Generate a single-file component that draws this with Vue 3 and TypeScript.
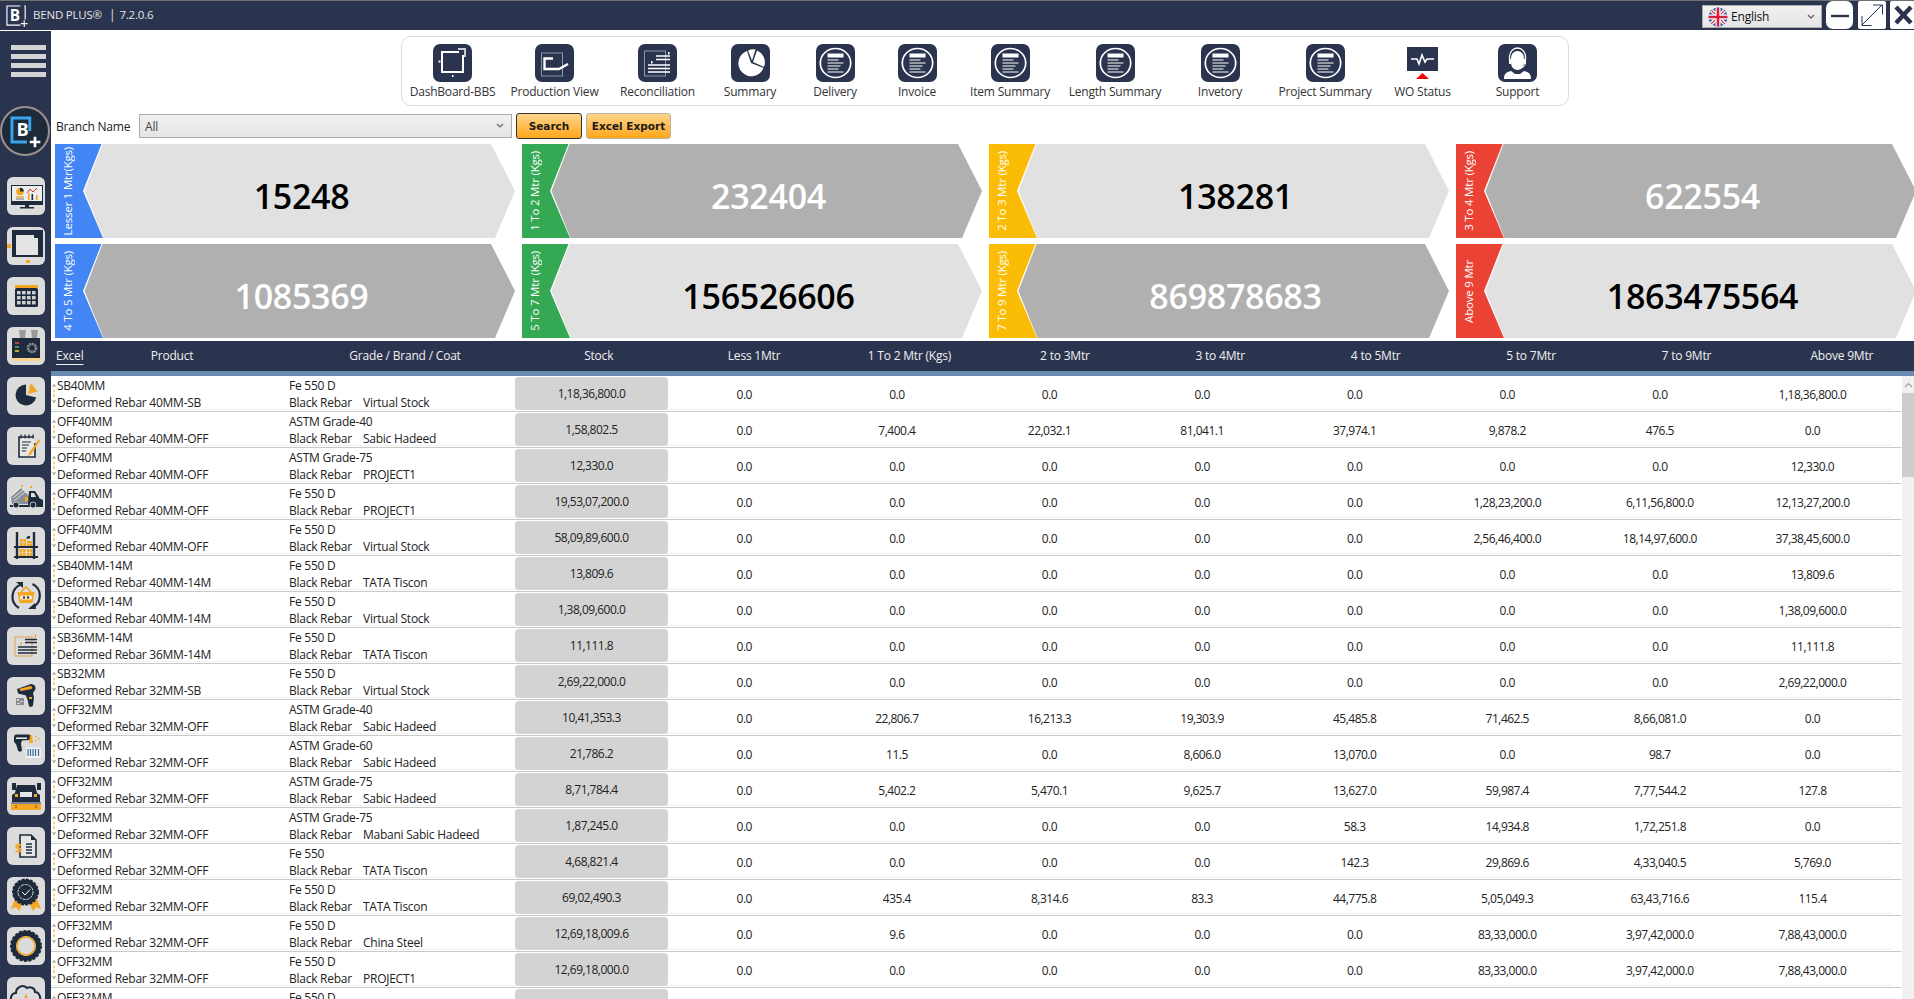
<template>
  <div class="app">
    <header class="titlebar">
      <svg class="title-logo" viewBox="0 0 24 24">
        <path d="M15 1H1v20h14" fill="none" stroke="#fff" stroke-width="1.2" />
        <path d="M19 1h1v14" fill="none" stroke="#fff" stroke-width="1.2" />
        <text x="4" y="17" font-size="16" font-weight="700" fill="#fff" font-family="Open Sans, sans-serif">B</text>
        <path d="M19 16v7M15.5 19.5h7" stroke="#fff" stroke-width="1.2" />
      </svg>
      <span class="title-text">BEND PLUS®</span>
      <span class="title-sep">|</span>
      <span class="title-text">7.2.0.6</span>
      <div class="title-right">
        <div class="lang">
          <svg class="flag" viewBox="0 0 20 20">
            <clipPath id="flagclip"><circle cx="10" cy="10" r="9.5" /></clipPath>
            <g clip-path="url(#flagclip)">
              <rect width="20" height="20" fill="#2a56a8" />
              <path d="M0 0l20 20M20 0L0 20" stroke="#fff" stroke-width="4" />
              <path d="M0 0l20 20M20 0L0 20" stroke="#d8203c" stroke-width="1.2" />
              <path d="M10 0v20M0 10h20" stroke="#fff" stroke-width="5" />
              <path d="M10 0v20M0 10h20" stroke="#d8203c" stroke-width="2.6" />
            </g>
          </svg>
          <span>English</span>
          <svg class="chev" viewBox="0 0 8 6"><path d="M1 1l3 3 3-3" fill="none" stroke="#666" stroke-width="1.4" /></svg>
        </div>
        <button class="win win-min"><svg viewBox="0 0 27 28"><path d="M5 15h18" stroke="#2b344e" stroke-width="2.4" /></svg></button>
        <button class="win win-max">
          <svg viewBox="0 0 28 28">
            <path d="M4 24L24 4M15 4h9.5v9.5M4 15v9.5h9.5" fill="none" stroke="#2b344e" stroke-width="1" />
          </svg>
        </button>
        <button class="win win-close"><svg viewBox="0 0 24 28"><path d="M6 6l15 16M21 6L6 22" stroke="#2b344e" stroke-width="4.4" /></svg></button>
      </div>
    </header>

    <div class="shell">
      <aside class="sidebar">
        <div class="burger"><i></i><i></i><i></i><i></i></div>
        <div class="brand">
          <svg viewBox="0 0 48 48">
            <path d="M29 24V10.400H10.400V35.500H26" fill="none" stroke="#38a5ef" stroke-width="3" />
            <text x="15" y="29" font-size="19" font-weight="700" fill="#fff" font-family="Open Sans, sans-serif">B</text>
            <path d="M34.400 30v11M29 35.500h11" stroke="#fff" stroke-width="2.800" />
          </svg>
        </div>

        <div class="side-btn">
          <svg viewBox="0 0 38 38">
            <rect x="4" y="8" width="32" height="20" fill="#1d2b3d" />
            <rect x="5" y="9" width="30" height="15" fill="#ededed" />
            <path d="M18 27h4v3h-4zM13 30h14v1.6H13z" fill="#1d2b3d" />
            <circle cx="13" cy="14.5" r="3.8" fill="#f5a623" />
            <path d="M13 14.5V10.7a3.8 3.8 0 0 1 3.8 3.8z" fill="#1d2b3d" />
            <path d="M9 20h8" stroke="#f5a623" stroke-width="1.4" />
            <path d="M9 22h8" stroke="#555" stroke-width=".8" />
            <path d="M21 16h1.6v7H21zM29 18h1.6v5H29z" fill="#f5a623" />
            <path d="M24.5 17h1.6v6h-1.6z" fill="#1d2b3d" />
            <path d="M20 16l3-4 3 3 4-4" fill="none" stroke="#d8342c" stroke-width="1" />
          </svg>
        </div>
        <div class="side-btn">
          <svg viewBox="0 0 38 38">
            <path d="M5 3h31v27H5z" fill="#1d2b3d" />
            <path d="M9 8h18v3h4v17H9z" fill="#e3e3e3" />
            <path d="M0 17h4v4H0zM19 33h4v3h-4z" fill="#f5a623" />
          </svg>
        </div>
        <div class="side-btn">
          <svg viewBox="0 0 38 38">
            <rect x="8" y="8" width="23" height="3" fill="#f5a623" />
            <rect x="8" y="11" width="23" height="19" rx="1.5" fill="#1d2b3d" />
            <g fill="#cfcfcf">
              <rect x="10" y="14" width="3.6" height="3.4" /><rect x="15" y="14" width="3.6" height="3.4" /><rect x="20" y="14" width="3.6" height="3.4" /><rect x="25" y="14" width="3.6" height="3.4" />
              <rect x="10" y="19" width="3.6" height="3.4" /><rect x="15" y="19" width="3.6" height="3.4" /><rect x="20" y="19" width="3.6" height="3.4" /><rect x="25" y="19" width="3.6" height="3.4" />
              <rect x="10" y="24" width="3.6" height="3.4" /><rect x="15" y="24" width="3.6" height="3.4" /><rect x="20" y="24" width="3.6" height="3.4" /><rect x="25" y="24" width="3.6" height="3.4" />
            </g>
          </svg>
        </div>
        <div class="side-btn">
          <svg viewBox="0 0 38 38">
            <path d="M12 3h7l-1 8h-5zM24 3h7l-1 8h-5z" fill="#9a9a9a" />
            <rect x="5" y="11" width="28" height="20" fill="#1d2b3d" />
            <path d="M8 16h4" stroke="#e0483c" stroke-width="1.6" />
            <path d="M8 20h4" stroke="#46b25a" stroke-width="1.6" />
            <path d="M8 24h4" stroke="#f5c623" stroke-width="1.6" />
            <circle cx="25" cy="21" r="4" fill="none" stroke="#8d8d8d" stroke-width="2.6" stroke-dasharray="2 .6" />
            <rect x="6" y="31" width="28" height="3" fill="#fbd38b" />
          </svg>
        </div>
        <div class="side-btn">
          <svg viewBox="0 0 38 38">
            <path d="M19 7.500a10.500 10.500 0 1 0 10.200 13L19 18z" fill="#1d2b3d" />
            <path d="M23 8l1.500-1.500 6 8L21 17z" fill="#f5a623" />
          </svg>
        </div>
        <div class="side-btn">
          <svg viewBox="0 0 38 38">
            <path d="M28 16v14H12V10h15" fill="#e7e7e7" stroke="#1d2b3d" stroke-width="1.6" />
            <path d="M14 7.500v4M18 7.500v4M22 7.500v4M26 7.500v4" stroke="#1d2b3d" stroke-width="1.2" />
            <path d="M15 15h9M15 18h7M15 21h5M15 24h4" stroke="#1d2b3d" stroke-width="1" />
            <path d="M32 12L22 26l-1 3 3-1.500L33 14z" fill="#f5a623" />
          </svg>
        </div>
        <div class="side-btn">
          <svg viewBox="0 0 38 38">
            <path d="M4 20l10-9 8 8v8H5z" fill="#8a8f98" />
            <path d="M5 18l9-8M6 21l10-8M7 24l11-9" stroke="#f0f0f0" stroke-width=".8" />
            <path d="M14 10l2-2" stroke="#f5a623" stroke-width="1.4" />
            <path d="M22 14h6l4 6v1l4 2v5H21z" fill="#1d2b3d" />
            <path d="M24 16h3l2 4h-5z" fill="#e0e0e0" />
            <path d="M18 20h3v4h-3zM23 9h2v2h-2z" fill="#f5a623" />
            <path d="M3 28h33v2H3z" fill="#1d2b3d" />
            <circle cx="9" cy="28" r="3" fill="#1d2b3d" stroke="#ddd" stroke-width=".8" />
            <circle cx="26" cy="28" r="3" fill="#1d2b3d" stroke="#ddd" stroke-width=".8" />
          </svg>
        </div>
        <div class="side-btn">
          <svg viewBox="0 0 38 38">
            <path d="M10 5v27M27 5v27" stroke="#1d2b3d" stroke-width="2.4" />
            <path d="M7 20h24M7 30h24" stroke="#1d2b3d" stroke-width="1.8" />
            <path d="M13 12h6v7h-6zM20 14h5v5h-5zM12.500 22h6v7h-6zM20 22h5v7h-5z" fill="#f5a623" />
            <path d="M13 15.500h6M16 12v7M12.500 25.500h6M15.500 22v7M20 25.500h5M22.500 22v7M20 16.500h5" stroke="#e3e3e3" stroke-width=".6" />
            <path d="M19 11l2-2h2v2l-2 1z" fill="#1d2b3d" />
          </svg>
        </div>
        <div class="side-btn">
          <svg viewBox="0 0 38 38">
            <path d="M14 7.500A13 13 0 0 0 12 31" fill="none" stroke="#1d2b3d" stroke-width="2.2" />
            <path d="M24 31a13 13 0 0 0 1.500-24" fill="none" stroke="#1d2b3d" stroke-width="2.2" />
            <path d="M9 5h7v6zM29 32h-8l7-6z" fill="#1d2b3d" />
            <path d="M14 15l5-5 5 5" fill="none" stroke="#f5a623" stroke-width="1.6" />
            <path d="M10.500 15h17l-2 11h-13z" fill="#f5a623" />
            <rect x="13" y="18.500" width="12" height="4" rx="1" fill="#f4e6cf" />
            <path d="M16 19.500h2v2h-2zM20 19.500h2v2h-2z" fill="#1d2b3d" />
          </svg>
        </div>
        <div class="side-btn">
          <svg viewBox="0 0 38 38">
            <rect x="8" y="10" width="17" height="19" fill="none" stroke="#e2ad66" stroke-width="1.2" />
            <path d="M18 12.500h12M18 15.500h12" stroke="#1d2b3d" stroke-width="1.6" />
            <path d="M11 20h19M11 23h19M11 26h19" stroke="#1d2b3d" stroke-width="1.6" />
            <path d="M28 7l1.500 1-1 3-1.200-.5zM14 15l1.500 1-1.500 2-1-1z" fill="#f5a623" />
          </svg>
        </div>
        <div class="side-btn">
          <svg viewBox="0 0 38 38">
            <path d="M10 12l14-5c4 0 5.500 4 4 6l-2 3 1 5-1 7c0 2-2.500 2-4 1.500l-1-5-2-6-8-2z" fill="#1d2b3d" />
            <path d="M12 12l11-3c2 0 3 2 1.500 3L14 14z" fill="#f5a623" />
            <path d="M22 20h3v2h-3z" fill="#f5a623" />
            <rect x="9" y="21" width="8" height="7" fill="#8a8a8a" />
            <path d="M10 22h2v2h-2zM13 24h3v1h-3zM10 26h3v1h-3z" fill="#dcdcdc" />
          </svg>
        </div>
        <div class="side-btn">
          <svg viewBox="0 0 38 38">
            <path d="M7 10c0-1.500 1-2.500 2-2.500h13c2 0 2 5.500 0 5.500l-7 .5-1 3 1 7c-.5 1.500-3.500 1.500-4 0L9 17 7 15z" fill="#1d2b3d" />
            <path d="M9 10.500h11v1.400H9z" fill="#fff" />
            <path d="M23 8h2l1 8h-4z" fill="#f5a623" />
            <path d="M28 9h1.500v1.500H28zM31 11h1.500v1.500H31zM28 13h1.500v1.500H28z" fill="#f5a623" />
            <rect x="19" y="20.500" width="15" height="10.500" fill="#eef1f5" />
            <path d="M21 22v7M23.500 22v7M26 22v7M28.500 22v7M31.500 22v7" stroke="#3f6a96" stroke-width="1.2" />
          </svg>
        </div>
        <div class="side-btn">
          <svg viewBox="0 0 38 38">
            <path d="M5 6h4v7H5zM30 6h4v7h-4z" fill="#1d2b3d" />
            <path d="M10 8h18l2 8 3 2v7H5v-7l3-2z" fill="#1d2b3d" />
            <path d="M13 15h12v5H13z" fill="#e6e6e6" />
            <path d="M8 17h3v3H8zM27 17h3v3h-3z" fill="#f5a623" />
            <rect x="4" y="27" width="30" height="6" fill="#f5a623" />
            <path d="M4 26h30" stroke="#1d2b3d" stroke-width="1" />
            <path d="M9 28v4M29 28v4" stroke="#1d2b3d" stroke-width="1" stroke-dasharray="1 1" />
          </svg>
        </div>
        <div class="side-btn">
          <svg viewBox="0 0 38 38">
            <path d="M13 8h11l5 5v17H13z" fill="#e6e6e6" stroke="#1d2b3d" stroke-width="1.6" />
            <path d="M24 8v5h5z" fill="#1d2b3d" />
            <path d="M19 17h6M19 20h6M19 23h6M19 26h6" stroke="#1d2b3d" stroke-width="1.4" />
            <text x="8" y="26" font-size="13" font-weight="700" fill="#f5a623" font-family="Open Sans, sans-serif">$</text>
          </svg>
        </div>
        <div class="side-btn">
          <svg viewBox="0 0 38 38">
            <path d="M8 22l-4 10 5-2 3 4 4-8zM30 22l4 10-5-2-3 4-4-8z" fill="#f5a623" />
            <circle cx="18.500" cy="15" r="12.500" fill="#1d2b3d" stroke="#1d2b3d" stroke-width="2" stroke-dasharray="3 1.200" />
            <circle cx="18.500" cy="15" r="12" fill="#1d2b3d" />
            <circle cx="18.500" cy="15" r="7.500" fill="none" stroke="#fff" stroke-width=".8" stroke-dasharray="3 .8" />
            <path d="M15 15l3 3 5-5.500" fill="none" stroke="#fff" stroke-width="1" />
          </svg>
        </div>
        <div class="side-btn">
          <svg viewBox="0 0 38 38">
            <circle cx="19" cy="19" r="12.500" fill="none" stroke="#1d2b3d" stroke-width="5" />
            <circle cx="19" cy="19" r="15" fill="none" stroke="#1d2b3d" stroke-width="2" stroke-dasharray="3 1.500" />
            <circle cx="19" cy="19" r="9" fill="#dcdcdc" stroke="#f5a623" stroke-width="1.600" />
          </svg>
        </div>
        <div class="side-btn">
          <svg viewBox="0 0 38 38">
            <path d="M6 26c-4-3-2-10 3-10 0-6 7-9 11-5 3-2 8 0 8 4 5 0 7 8 3 11" fill="none" stroke="#1d2b3d" stroke-width="2" />
            <path d="M19 17l2 4h-4zM14 22h10v6H14z" fill="#f5a623" />
          </svg>
        </div>
      </aside>

      <main class="main">
        <nav class="toolbar">
          <div v-for="t in tools" :key="t.label" class="tool">
            <div v-if="t.icon === 'wo'" class="wo-icon">
              <svg viewBox="0 0 31 32">
                <rect width="31" height="24" fill="#2b344e" />
                <path d="M4 12h6l2 5 3-9 3 7 2-3h7" fill="none" stroke="#fff" stroke-width="1.6" />
                <path d="M9 32l6.500-6 6.500 6z" fill="#ff0000" />
              </svg>
            </div>
            <div v-else class="tool-icon">
              <svg v-if="t.icon === 'doc'" viewBox="0 0 39 38">
                <ellipse cx="19.500" cy="19" rx="15.200" ry="14.500" fill="none" stroke="#fff" stroke-width="1.700" />
                <path d="M11.500 9.500h16v4h-16z" fill="#fff" />
                <path d="M11.500 16h11M11.500 19h16M11.500 22h13M11.500 25h11M11.500 28h16" stroke="#fff" stroke-width="1.200" />
              </svg>
              <svg v-else-if="t.icon === 'dash'" viewBox="0 0 39 38">
                <path d="M26 8H9v20h21V11" fill="none" stroke="#fff" stroke-width="2" />
                <path d="M25 5h7v8" fill="none" stroke="#c9ccd3" stroke-width="2" />
                <rect x="5.500" y="16.500" width="2" height="2" fill="#fff" />
                <rect x="19" y="31" width="1.500" height="2" fill="#fff" />
              </svg>
              <svg v-else-if="t.icon === 'prod'" viewBox="0 0 39 38">
                <rect x="6.500" y="9" width="21" height="23" fill="none" stroke="#8f95a6" stroke-width="1" />
                <path d="M18 14.500H9.500V25H24l9-5" fill="none" stroke="#fff" stroke-width="2.400" />
              </svg>
              <svg v-else-if="t.icon === 'rec'" viewBox="0 0 39 38">
                <rect x="6.500" y="7" width="21" height="25" fill="none" stroke="#8f95a6" stroke-width="1" />
                <path d="M18 12h14M18 15.500h14M10 21h22M10 24.500h22M10 28h22" stroke="#fff" stroke-width="1.700" />
                <rect x="30" y="8" width="1.500" height="2.500" fill="#fff" />
                <rect x="13" y="17" width="1.500" height="2.500" fill="#fff" />
              </svg>
              <svg v-else-if="t.icon === 'pie'" viewBox="0 0 39 38">
                <path d="M16 7a13 13 0 1 0 16.500 17L20 19z" fill="#fff" />
                <path d="M17 6.500l4 10 3.500-11a13 13 0 0 0-7.500 1z" fill="#fff" />
                <path d="M26 6.500a13 13 0 0 1 7 16.500l-11-5z" fill="#fff" />
              </svg>
              <svg v-else viewBox="0 0 39 38">
                <path d="M13 14a6.500 7 0 0 1 13 0v5a6.500 7 0 0 1-13 0z" fill="#fff" />
                <path d="M11.500 16v-3a8 9 0 0 1 16 0v3" fill="none" stroke="#fff" stroke-width="1.300" />
                <path d="M11 15h2v5h-2zM26 15h2v5h-2z" fill="#fff" />
                <path d="M27 20c0 3-3 4-6 4" fill="none" stroke="#fff" stroke-width="1" />
                <path d="M6 35c0-5 2-7 7-8l4 3h5l4-3c5 1 7 3 7 8z" fill="#fff" />
              </svg>
            </div>
            <span class="tool-label">{{ t.label }}</span>
          </div>
        </nav>

        <div class="filter">
          <label class="filter-label">Branch Name</label>
          <div class="branch">
            <span>All</span>
            <svg class="chev" viewBox="0 0 8 6"><path d="M1 1l3 3 3-3" fill="none" stroke="#666" stroke-width="1.200" /></svg>
          </div>
          <button class="btn btn-search">Search</button>
          <button class="btn btn-export">Excel Export</button>
        </div>

        <section class="cards">
          <div v-for="c in cards" :key="c.label" class="card">
            <div class="card-tag" :style="{ background: c.color }"><span>{{ c.label }}</span></div>
            <div class="card-body" :class="c.dark ? 'is-dark' : 'is-light'"><span>{{ c.value }}</span></div>
          </div>
        </section>

        <div class="thead">
          <span class="th-excel"><u>Excel</u></span>
          <span>Product</span>
          <span class="th-grade">Grade / Brand / Coat</span>
          <span v-for="h in heads" :key="h">{{ h }}</span>
        </div>
        <div class="tstrip"></div>

        <div class="tbody">
          <div class="rows">
            <div v-for="(r, i) in rows" :key="i" class="row">
              <div class="row-in">
                <div class="cell-product">
                  <svg class="sort" viewBox="0 0 6 30">
                    <path d="M1.500 8l1.500-2.500L4.500 8M1.500 21l1.500 2.500L4.500 21" fill="none" stroke="#777" stroke-width=".8" />
                    <path d="M3 10.500v8" stroke="#f5a623" stroke-width="1" stroke-dasharray="3 1.500" />
                  </svg>
                  <div class="lines">
                    <div>{{ r.code }}</div>
                    <div>{{ r.name }}</div>
                  </div>
                </div>
                <div class="lines cell-grade">
                  <div>{{ r.grade }}</div>
                  <div><span class="coat">Black Rebar</span>{{ r.brand }}</div>
                </div>
                <div class="stock-wrap"><div class="stock">{{ r.stock }}</div></div>
                <div v-for="(v, j) in r.vals" :key="j" class="val">{{ v }}</div>
              </div>
            </div>
          </div>
          <div class="scroll">
            <div class="scroll-up"><svg viewBox="0 0 9 6"><path d="M1 5l3.500-3.500L8 5" fill="none" stroke="#a0a0a0" stroke-width="1.200" /></svg></div>
            <div class="scroll-thumb"></div>
          </div>
        </div>
      </main>
    </div>
  </div>
</template>

<script setup lang="ts">
interface Tool { label: string, icon: string }
interface Card { label: string, value: string, color: string, dark: boolean }
interface Row { code: string, name: string, grade: string, brand: string, stock: string, vals: string[] }

const blue = '#4285f4'
const green = '#34a853'
const yellow = '#fbbc05'
const red = '#ea4335'

const tools: Tool[] = [
  { label: 'DashBoard-BBS', icon: 'dash' },
  { label: 'Production View', icon: 'prod' },
  { label: 'Reconciliation', icon: 'rec' },
  { label: 'Summary', icon: 'pie' },
  { label: 'Delivery', icon: 'doc' },
  { label: 'Invoice', icon: 'doc' },
  { label: 'Item Summary', icon: 'doc' },
  { label: 'Length Summary', icon: 'doc' },
  { label: 'Invetory', icon: 'doc' },
  { label: 'Project Summary', icon: 'doc' },
  { label: 'WO Status', icon: 'wo' },
  { label: 'Support', icon: 'support' },
]

const cards: Card[] = [
  { label: 'Lesser 1 Mtr(Kgs)', value: '15248', color: blue, dark: false },
  { label: '1 To 2 Mtr (Kgs)', value: '232404', color: green, dark: true },
  { label: '2 To 3 Mtr (Kgs)', value: '138281', color: yellow, dark: false },
  { label: '3 To 4 Mtr (Kgs)', value: '622554', color: red, dark: true },
  { label: '4 To 5 Mtr (Kgs)', value: '1085369', color: blue, dark: true },
  { label: '5 To 7 Mtr (Kgs)', value: '156526606', color: green, dark: false },
  { label: '7 To 9 Mtr (Kgs)', value: '869878683', color: yellow, dark: true },
  { label: 'Above 9 Mtr', value: '1863475564', color: red, dark: false },
]

const heads = ['Stock', 'Less 1Mtr', '1 To 2 Mtr (Kgs)', '2 to 3Mtr', '3 to 4Mtr', '4 to 5Mtr', '5 to 7Mtr', '7 to 9Mtr', 'Above 9Mtr']

// only the last column filled, used by most of the rows
function lastOnly(v: string) {
  return ['0.0', '0.0', '0.0', '0.0', '0.0', '0.0', '0.0', v]
}

const rows: Row[] = [
  { code: 'SB40MM', name: 'Deformed Rebar 40MM-SB', grade: 'Fe 550 D', brand: 'Virtual Stock', stock: '1,18,36,800.0', vals: lastOnly('1,18,36,800.0') },
  { code: 'OFF40MM', name: 'Deformed Rebar 40MM-OFF', grade: 'ASTM Grade-40', brand: 'Sabic Hadeed', stock: '1,58,802.5', vals: ['0.0', '7,400.4', '22,032.1', '81,041.1', '37,974.1', '9,878.2', '476.5', '0.0'] },
  { code: 'OFF40MM', name: 'Deformed Rebar 40MM-OFF', grade: 'ASTM Grade-75', brand: 'PROJECT1', stock: '12,330.0', vals: lastOnly('12,330.0') },
  { code: 'OFF40MM', name: 'Deformed Rebar 40MM-OFF', grade: 'Fe 550 D', brand: 'PROJECT1', stock: '19,53,07,200.0', vals: ['0.0', '0.0', '0.0', '0.0', '0.0', '1,28,23,200.0', '6,11,56,800.0', '12,13,27,200.0'] },
  { code: 'OFF40MM', name: 'Deformed Rebar 40MM-OFF', grade: 'Fe 550 D', brand: 'Virtual Stock', stock: '58,09,89,600.0', vals: ['0.0', '0.0', '0.0', '0.0', '0.0', '2,56,46,400.0', '18,14,97,600.0', '37,38,45,600.0'] },
  { code: 'SB40MM-14M', name: 'Deformed Rebar 40MM-14M', grade: 'Fe 550 D', brand: 'TATA Tiscon', stock: '13,809.6', vals: lastOnly('13,809.6') },
  { code: 'SB40MM-14M', name: 'Deformed Rebar 40MM-14M', grade: 'Fe 550 D', brand: 'Virtual Stock', stock: '1,38,09,600.0', vals: lastOnly('1,38,09,600.0') },
  { code: 'SB36MM-14M', name: 'Deformed Rebar 36MM-14M', grade: 'Fe 550 D', brand: 'TATA Tiscon', stock: '11,111.8', vals: lastOnly('11,111.8') },
  { code: 'SB32MM', name: 'Deformed Rebar 32MM-SB', grade: 'Fe 550 D', brand: 'Virtual Stock', stock: '2,69,22,000.0', vals: lastOnly('2,69,22,000.0') },
  { code: 'OFF32MM', name: 'Deformed Rebar 32MM-OFF', grade: 'ASTM Grade-40', brand: 'Sabic Hadeed', stock: '10,41,353.3', vals: ['0.0', '22,806.7', '16,213.3', '19,303.9', '45,485.8', '71,462.5', '8,66,081.0', '0.0'] },
  { code: 'OFF32MM', name: 'Deformed Rebar 32MM-OFF', grade: 'ASTM Grade-60', brand: 'Sabic Hadeed', stock: '21,786.2', vals: ['0.0', '11.5', '0.0', '8,606.0', '13,070.0', '0.0', '98.7', '0.0'] },
  { code: 'OFF32MM', name: 'Deformed Rebar 32MM-OFF', grade: 'ASTM Grade-75', brand: 'Sabic Hadeed', stock: '8,71,784.4', vals: ['0.0', '5,402.2', '5,470.1', '9,625.7', '13,627.0', '59,987.4', '7,77,544.2', '127.8'] },
  { code: 'OFF32MM', name: 'Deformed Rebar 32MM-OFF', grade: 'ASTM Grade-75', brand: 'Mabani Sabic Hadeed', stock: '1,87,245.0', vals: ['0.0', '0.0', '0.0', '0.0', '58.3', '14,934.8', '1,72,251.8', '0.0'] },
  { code: 'OFF32MM', name: 'Deformed Rebar 32MM-OFF', grade: 'Fe 550', brand: 'TATA Tiscon', stock: '4,68,821.4', vals: ['0.0', '0.0', '0.0', '0.0', '142.3', '29,869.6', '4,33,040.5', '5,769.0'] },
  { code: 'OFF32MM', name: 'Deformed Rebar 32MM-OFF', grade: 'Fe 550 D', brand: 'TATA Tiscon', stock: '69,02,490.3', vals: ['0.0', '435.4', '8,314.6', '83.3', '44,775.8', '5,05,049.3', '63,43,716.6', '115.4'] },
  { code: 'OFF32MM', name: 'Deformed Rebar 32MM-OFF', grade: 'Fe 550 D', brand: 'China Steel', stock: '12,69,18,009.6', vals: ['0.0', '9.6', '0.0', '0.0', '0.0', '83,33,000.0', '3,97,42,000.0', '7,88,43,000.0'] },
  { code: 'OFF32MM', name: 'Deformed Rebar 32MM-OFF', grade: 'Fe 550 D', brand: 'PROJECT1', stock: '12,69,18,000.0', vals: ['0.0', '0.0', '0.0', '0.0', '0.0', '83,33,000.0', '3,97,42,000.0', '7,88,43,000.0'] },
  { code: 'OFF32MM', name: 'Deformed Rebar 32MM-OFF', grade: 'Fe 550 D', brand: 'Virtual Stock', stock: '12,69,18,000.0', vals: ['0.0', '0.0', '0.0', '0.0', '0.0', '83,33,000.0', '3,97,42,000.0', '7,88,43,000.0'] },
]
</script>

<style scoped>
.app {
  width: 1914px;
  height: 999px;
  overflow: hidden;
  display: flex;
  flex-direction: column;
  background: #fff;
  font-family: "Open Sans", "Noto Sans", sans-serif;
  font-size: 12px;
  letter-spacing: -.2px;
  color: #222;
}

.titlebar {
  height: 30px;
  flex: none;
  box-sizing: border-box;
  border-top: 1px solid #707070;
  background: #2b344e;
  color: #e6e6e6;
  display: flex;
  align-items: center;
  padding-left: 6px;
}
.title-logo { width: 23px; height: 23px; margin-right: 4px; margin-top: 2px; }
.title-text { font-size: 11.5px; margin-bottom: 3px; }
.title-sep { margin: 0 4px 3px 7px; font-size: 12px; }
.title-right { margin-left: auto; display: flex; align-items: center; }

.lang {
  width: 120px;
  height: 23px;
  box-sizing: border-box;
  border: 1px solid #acacac;
  background: linear-gradient(#f0f0f0, #e5e5e5);
  display: flex;
  align-items: center;
  padding: 0 6px 0 5px;
  color: #111;
  margin-right: 4px;
  margin-top: 2px;
}
.flag { width: 20px; height: 20px; margin-right: 3px; }
.lang .chev { margin-left: auto; }
.chev { width: 8px; height: 6px; }

.win {
  border: 0;
  padding: 0;
  background: #fff;
  height: 28px;
  display: block;
  margin-bottom: 1px;
}
.win svg { display: block; width: 100%; height: 100%; }
.win-min { width: 27px; border-radius: 7px; margin-right: 5px; }
.win-max { width: 28px; border-radius: 2px; margin-right: 4px; }
.win-close { width: 24px; border-radius: 2px 0 0 2px; }

.shell { flex: 1; display: flex; min-height: 0; }

.sidebar {
  width: 51px;
  flex: none;
  box-sizing: border-box;
  background: #2b344e;
  border-top: 1px solid #fff;
  display: flex;
  flex-direction: column;
  align-items: center;
  padding-top: 14px;
  overflow: hidden;
}
.burger {
  width: 35px;
  margin-left: 6px;
  display: flex;
  flex-direction: column;
  gap: 4px;
}
.burger i { display: block; height: 5px; background: #d4d4d4; }
.brand {
  width: 50px;
  height: 50px;
  box-sizing: border-box;
  flex: none;
  margin-top: 29px;
  margin-left: -1px;
  border-radius: 50%;
  border: 2px solid #9c9090;
  background: #1c2a3a;
}
.brand svg { display: block; width: 100%; height: 100%; }
.side-btn {
  width: 38px;
  height: 38px;
  flex: none;
  margin-top: 12px;
  border-radius: 6px;
  background: #dcdcdc;
}
.brand + .side-btn { margin-top: 21px; }
.side-btn svg { display: block; width: 38px; height: 38px; }

.main { flex: 1; min-width: 0; overflow: hidden; display: flex; flex-direction: column; }

.toolbar {
  width: 1168px;
  height: 70px;
  box-sizing: border-box;
  margin: 6px 0 0 350px;
  border: 1px solid #dadada;
  border-radius: 10px;
  display: grid;
  grid-template-columns: 101px 103px 103px 82px 88px 76px 110px 100px 110px 100px 95px 95px;
  flex: none;
}
.tool { display: flex; flex-direction: column; align-items: center; padding-top: 7px; }
.tool-icon {
  width: 39px;
  height: 38px;
  border-radius: 7px;
  background: #2b344e;
}
.tool-icon svg { display: block; width: 39px; height: 38px; }
.wo-icon { width: 39px; height: 38px; display: flex; justify-content: center; padding-top: 3px; box-sizing: border-box; }
.wo-icon svg { width: 31px; height: 32px; display: block; }
.tool-label { margin-top: 2px; font-size: 12px; line-height: 16px; white-space: nowrap; color: #333; }

.filter {
  height: 26px;
  flex: none;
  margin-top: 7px;
  display: flex;
  align-items: center;
  padding-left: 5px;
}
.filter-label { width: 83px; flex: none; font-size: 12px; }
.branch {
  width: 373px;
  height: 24px;
  box-sizing: border-box;
  border: 1px solid #acacac;
  background: linear-gradient(#f0f0f0, #e5e5e5);
  display: flex;
  align-items: center;
  justify-content: space-between;
  padding: 0 7px 0 5px;
  color: #444;
}
.btn {
  height: 26px;
  padding: 0;
  border-radius: 3px;
  background: linear-gradient(#fdd58c, #ffa71a);
  font-family: "DejaVu Sans", sans-serif;
  font-weight: 700;
  font-size: 10.5px;
  color: #1a1a1a;
}
.btn-search { width: 66px; margin-left: 4px; border: 1px solid #333; }
.btn-export { width: 85px; margin-left: 4px; border: 1px solid #bdb3a2; }

.cards {
  flex: none;
  margin-top: 5px;
  padding-left: 4px;
  display: grid;
  grid-template-columns: repeat(4, 467px);
  grid-auto-rows: 94px;
  row-gap: 6px;
}
.card { width: 460px; height: 94px; display: flex; }
.card-tag {
  width: 48px;
  flex: none;
  clip-path: polygon(0 0, 46.5px 0, 28px 47px, 48px 100%, 0 100%);
  display: flex;
  align-items: center;
  padding-left: 6px;
  box-sizing: border-box;
  color: #fff;
}
.card-tag span {
  writing-mode: vertical-rl;
  transform: rotate(180deg);
  font-size: 11.5px;
  line-height: 14px;
  white-space: nowrap;
}
.card-body {
  flex: 1;
  margin-left: -20px;
  clip-path: polygon(19.5px 0, 408px 0, 432px 47px, 412px 100%, 20.5px 100%, 1.5px 47px);
  display: flex;
  align-items: center;
  justify-content: center;
  padding: 10px 0 0 5px;
  box-sizing: border-box;
  font-size: 34px;
  letter-spacing: -.3px;
  font-weight: 600;
}
.is-light { background: #e1e1e1; color: #000; }
.is-dark { background: #b0b0b0; color: #fff; }

.thead {
  flex: none;
  margin-top: 3px;
  height: 30px;
  box-sizing: border-box;
  padding-bottom: 2px;
  background: #2b344e;
  color: #f0f0f0;
  display: grid;
  grid-template-columns: 45px 152px 273px repeat(9, 155.4px);
  align-items: center;
  justify-items: center;
  white-space: nowrap;
}
.th-excel { justify-self: start; padding-left: 5px; }
.th-excel u { text-underline-offset: 4px; }
.th-grade { padding-left: 41px; }
.tstrip { height: 5px; flex: none; background: #6a8cb0; }

.tbody { flex: 1; min-height: 0; display: flex; overflow: hidden; }
.rows { width: 1850px; flex: none; }
.row { height: 36px; box-sizing: border-box; border-bottom: 1px solid #c9c9c9; }
.row-in {
  width: 1839.5px;
  height: 34px;
  box-sizing: border-box;
  border-bottom: 1px solid #efefef;
  display: grid;
  grid-template-columns: 238px 226px 153px repeat(8, 152.6px);
  align-items: center;
}
.cell-product { display: flex; align-self: start; }
.cell-grade { align-self: start; }
.sort { width: 6px; height: 30px; flex: none; margin: 3px 0 0 0; }
.lines { line-height: 17px; white-space: nowrap; margin-top: 1px; letter-spacing: -.25px; }
.coat { display: inline-block; width: 74px; }
.stock-wrap { align-self: start; padding-top: 1px; }
.stock {
  height: 33px;
  box-sizing: border-box;
  padding-bottom: 1px;
  border-radius: 4px;
  background: #d3d3d3;
  display: flex;
  align-items: center;
  justify-content: center;
  letter-spacing: -.5px;
}
.val { text-align: center; padding-top: 1px; letter-spacing: -.5px; }

.scroll { width: 13px; margin-left: 1px; background: #f1f1f1; flex: none; }
.scroll-up { height: 17px; display: flex; align-items: center; justify-content: center; }
.scroll-up svg { width: 9px; height: 6px; }
.scroll-thumb { height: 84px; background: #cdcdcd; }
</style>

<style>
html, body { margin: 0; overflow: hidden; }
</style>
